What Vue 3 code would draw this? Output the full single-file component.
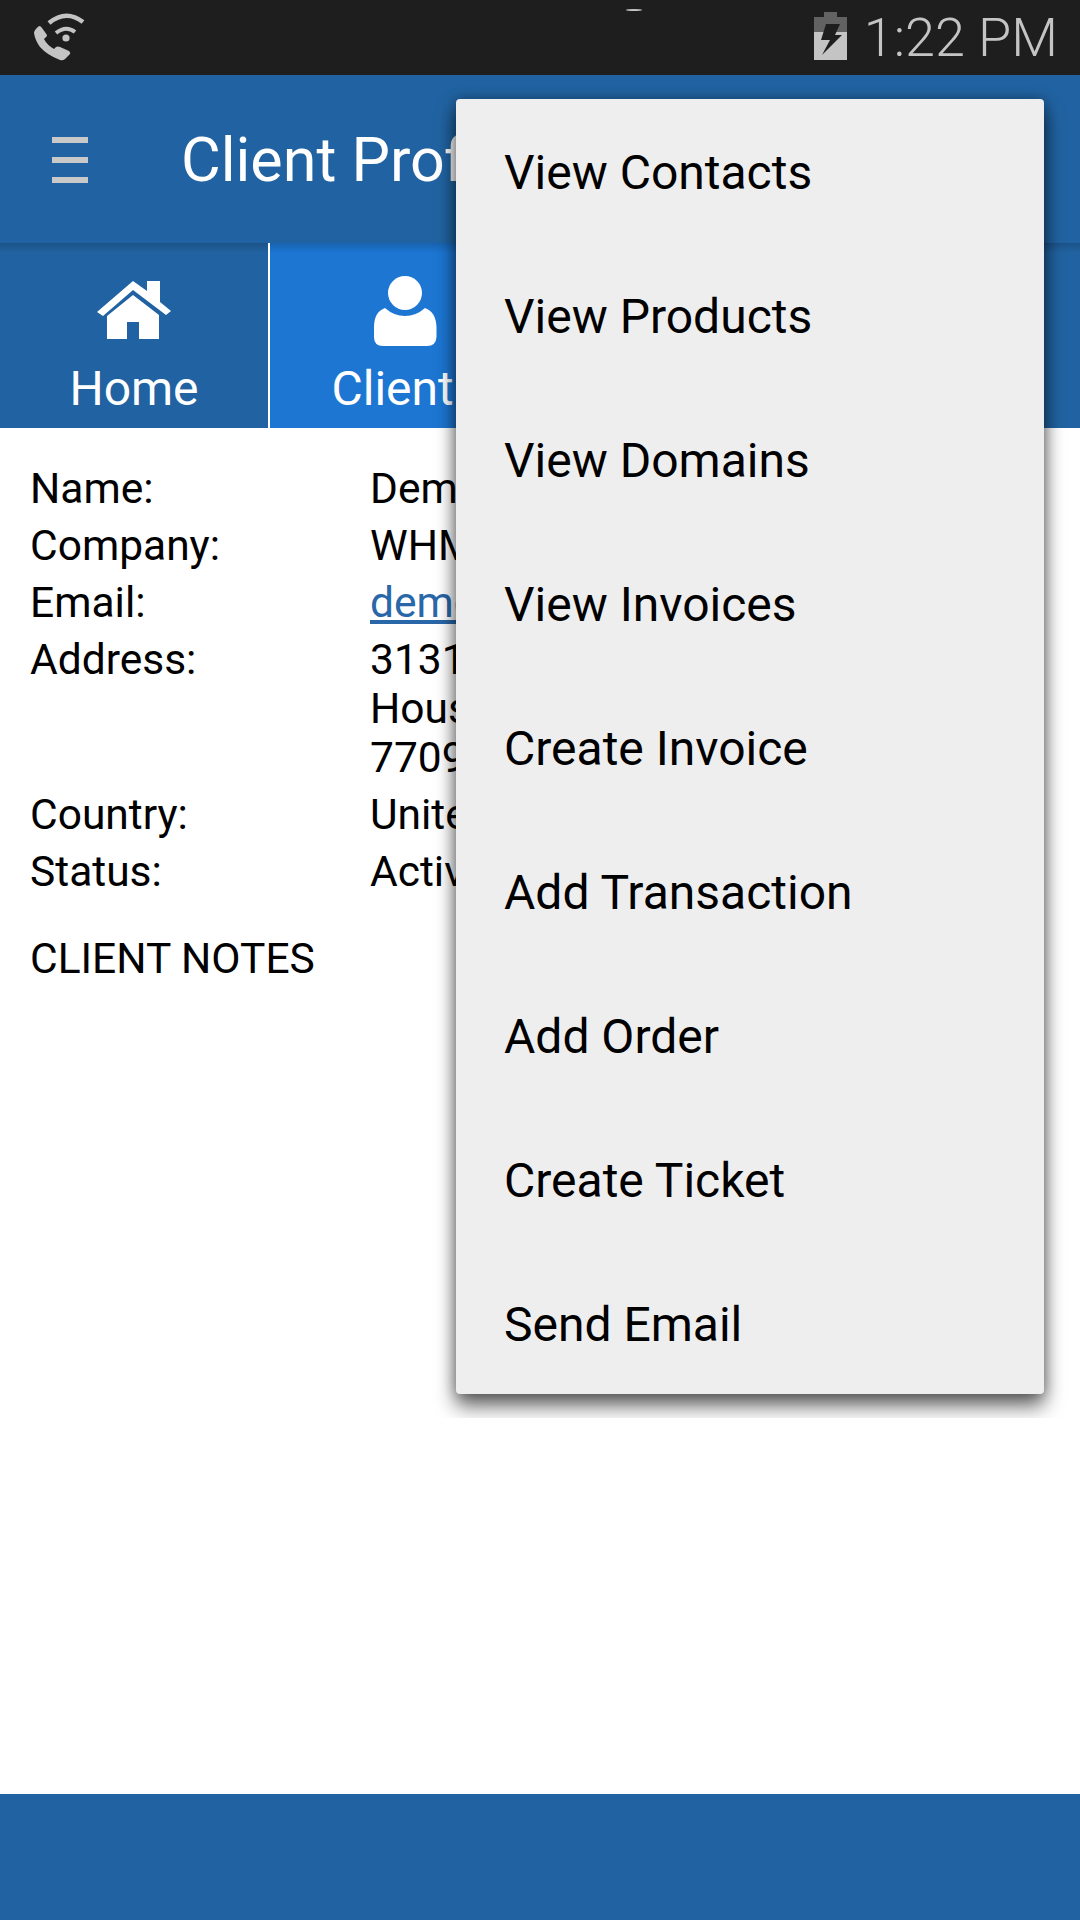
<script setup>
const rows = [
  { label: 'Name:', lines: ['Demo User'] },
  { label: 'Company:', lines: ['WHMCS Demo'] },
  { label: 'Email:', link: 'demo@whmcs.com' },
  { label: 'Address:', lines: ['3131 Main St', 'Houston, TX', '77095'] },
  { label: 'Country:', lines: ['United States'] },
  { label: 'Status:', lines: ['Active'] },
]
const menu = ['View Contacts', 'View Products', 'View Domains', 'View Invoices', 'Create Invoice', 'Add Transaction', 'Add Order', 'Create Ticket', 'Send Email']
</script>

<template>
  <div class="screen">
    <div class="status">
      <svg class="call" width="90" height="70" viewBox="0 0 90 70">
        <path d="M39 26Q41 26 42 28L47 35Q47 37 45 38L44 39Q47 45 54 49L56 47Q58 46 60 47L69 51Q71 53 70 54L65 59Q63 61 60 60Q47 55 40 47Q35 40 34 33Q34 30 39 26Z" fill="#c4c4c4"/>
        <path d="M49 23Q66 9 83 22" fill="none" stroke="#c4c4c4" stroke-width="4.500"/>
        <path d="M56 33Q66 25 75 32" fill="none" stroke="#c4c4c4" stroke-width="4"/>
        <circle cx="66" cy="38" r="3.600" fill="#c4c4c4"/>
      </svg>
      <div class="notch"></div>
      <div class="status-right">
        <svg class="battery" width="33" height="48" viewBox="0 0 33 48">
          <path d="M10 0H23V5H33V48H0V5H10Z" fill="#626262"/>
          <rect y="20" width="33" height="28" fill="#c4c4c4"/>
          <path d="M12 12H26L21 23H28L8 43L16 28H7Z" fill="#1e1e1e"/>
        </svg>
        <span class="clock">1:22 PM</span>
      </div>
    </div>

    <header class="header">
      <div class="burger"><i></i><i></i><i></i></div>
      <h1>Client Profile</h1>
    </header>

    <nav class="tabs">
      <div class="tab home">
        <svg width="74" height="58" viewBox="0 0 74 58">
          <path d="M0 31L36 0L50 10V0H63V17V21L74 30L69 34L36 9L6 35Z" fill="#fff"/>
          <path d="M10 35L36 14L62 34V58H42V41H30V58H10Z" fill="#fff"/>
        </svg>
        <span>Home</span>
      </div>
      <div class="tab active">
        <svg width="66" height="72" viewBox="0 0 66 72">
          <circle cx="33" cy="18" r="17" fill="#fff"/>
          <path d="M13 33 Q22 41 33 41 Q44 41 53 33 Q64 37 64.500 52 V62 Q64 71 55 71 H11 Q2 71 2 62 V52 Q2 37 13 33Z" fill="#fff"/>
        </svg>
        <span>Clients</span>
      </div>
      <div class="tab rest"></div>
    </nav>

    <main class="content">
      <div class="details">
        <div v-for="row in rows" :key="row.label" class="row">
          <div class="label">{{ row.label }}</div>
          <div class="value">
            <a v-if="row.link" class="link">{{ row.link }}</a>
            <div v-else class="value-lines">
              <div v-for="line in row.lines" :key="line">{{ line }}</div>
            </div>
          </div>
        </div>
      </div>
      <div class="notes">CLIENT NOTES</div>
    </main>

    <footer class="footer"></footer>

    <div class="menu-clip">
      <ul class="menu">
        <li v-for="item in menu" :key="item">{{ item }}</li>
      </ul>
    </div>
  </div>
</template>

<style>
html, body { margin: 0; padding: 0; }
</style>

<style scoped>
.screen {
  position: relative;
  width: 1080px;
  height: 1920px;
  overflow: hidden;
  display: flex;
  flex-direction: column;
  background: #fff;
  font-family: Roboto, "Noto Sans", sans-serif;
  color: #000;
}
.status {
  height: 75px;
  flex: none;
  background: #1e1e1e;
  display: flex;
  align-items: flex-start;
  position: relative;
}
.call { display: block; }
.notch {
  position: absolute;
  left: 626px;
  top: 9px;
  width: 16px;
  height: 2px;
  border-radius: 50%;
  background: #c4c4c4;
}
.status-right {
  margin-left: auto;
  display: flex;
  align-items: flex-start;
  padding-right: 22px;
}
.battery { margin-top: 12px; }
.clock {
  margin-left: 17px;
  font-weight: 300;
  font-size: 54px;
  line-height: 75px;
  color: #c4c4c4;
}
.header {
  height: 168px;
  flex: none;
  background: #2163a2;
  display: flex;
  align-items: center;
}
.burger {
  width: 36px;
  margin: 0 0 0 52px;
  display: flex;
  flex-direction: column;
  gap: 14px;
  transform: translateY(1px);
}
.burger i {
  display: block;
  height: 6px;
  background: #c9c9c9;
}
h1 {
  margin: 0 0 0 93px;
  font-weight: 400;
  font-size: 61px;
  color: #fff;
  white-space: nowrap;
  transform: translateY(1px);
}
.tabs {
  height: 185px;
  flex: none;
  display: flex;
  background: #2163a2;
  position: relative;
}
.tabs::after {
  content: "";
  position: absolute;
  inset: 0 0 auto 0;
  height: 10px;
  background: linear-gradient(rgba(0, 0, 0, .16), rgba(0, 0, 0, 0));
}
.tab {
  display: flex;
  flex-direction: column;
  align-items: center;
  color: #fff;
  font-size: 48px;
  box-sizing: border-box;
}
.tab span { line-height: 54px; }
.home {
  width: 268px;
  padding-top: 38px;
}
.home svg { margin-bottom: 23px; }
.active {
  width: 270px;
  margin-left: 2px;
  padding-top: 32px;
  background: #1c76d2;
  position: relative;
}
.active svg { margin-bottom: 15px; }
.tabs .home::after {
  content: "";
  position: absolute;
  left: 268px;
  top: 0;
  bottom: 0;
  width: 2px;
  background: #fff;
  z-index: 1;
}
.rest { flex: 1; }
.content {
  flex: 1;
  padding: 32px 0 0 30px;
  font-size: 42.500px;
}
.row { display: flex; }
.label {
  width: 340px;
  flex: none;
  line-height: 57px;
}
.value {
  line-height: 49px;
  padding: 4px 0;
  white-space: nowrap;
}
.link {
  color: #2a67a8;
  text-decoration: underline;
}
.notes { margin-top: 30px; line-height: 57px; }
.footer {
  height: 126px;
  flex: none;
  background: #2163a2;
}
.menu-clip {
  position: absolute;
  left: 420px;
  top: 75px;
  width: 660px;
  height: 1343px;
  overflow: hidden;
}
.menu {
  position: absolute;
  left: 36px;
  top: 24px;
  width: 588px;
  height: 1295px;
  margin: 0;
  padding: 0;
  list-style: none;
  background: #eeeeee;
  border-radius: 4px;
  box-shadow: 0 12px 20px rgba(0, 0, 0, .6), 0 0 14px rgba(0, 0, 0, .3);
}
.menu li {
  height: 143.900px;
  box-sizing: border-box;
  padding: 4px 0 0 48px;
  display: flex;
  align-items: center;
  font-size: 48px;
  color: #000;
  white-space: nowrap;
}
</style>
